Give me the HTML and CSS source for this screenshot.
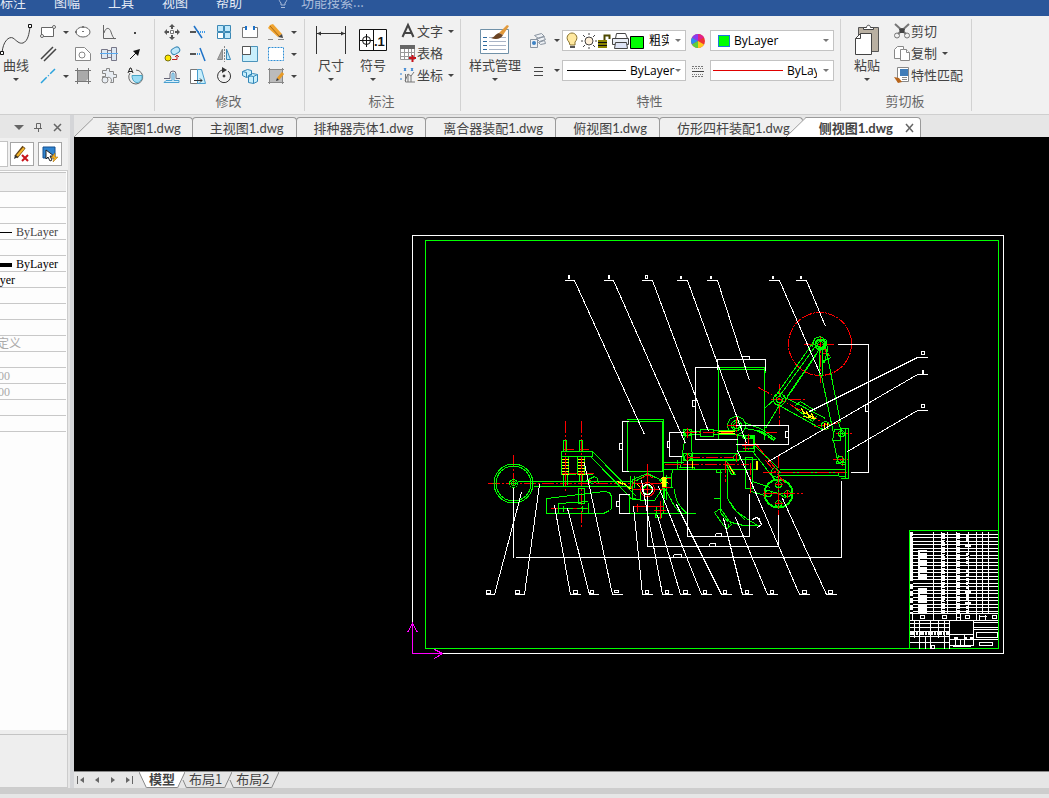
FILE: index.html
```html
<!DOCTYPE html>
<html lang="zh-CN">
<head>
    <meta charset="utf-8">
    <title>侧视图1.dwg</title>
    <link rel="stylesheet" href="styles.css">
</head>
<body>

<nav class="menubar">
  <a href="#">标注</a>
  <a href="#">图幅</a>
  <a href="#">工具</a>
  <a href="#">视图</a>
  <a href="#">帮助</a>
  <label class="search">
    <svg width="12" height="16" viewBox="0 0 12 16" fill="none" stroke="#a9bcdb"><path d="M4 11V9C1 6 1 1 6 1s5 5 2 8v2zM4 13.500h4"/></svg>
    <input type="text" placeholder="功能搜索..." aria-label="功能搜索">
  </label>
</nav>

<div class="ribbon">
  <!-- draw -->
  <section class="group">
    <div class="tools">
      <button class="big curve">
        <svg width="32" height="32" viewBox="0 0 32 32" fill="none" stroke="#444"><path d="M2 30C3 18 9 13 13 15c4 3 6 6 10 5 5-2 6-9 7-16"/><path d="M28.500 1.500h3v3h-3zM.5 28.500h3v3h-3z" fill="#fff" stroke="#111"/></svg>
        曲线<i class="arrow"></i>
      </button>
      <div class="icons draw-icons">
        <button aria-label="矩形"><svg width="18" height="18" fill="#fff" stroke="#666"><path d="M2.500 4.500h12v9h-12z"/><circle cx="15" cy="4" r="1.500"/><circle cx="3" cy="13" r="1.500"/></svg></button>
        <button class="drop" aria-label="矩形选项"><i class="arrow"></i></button>
        <button aria-label="椭圆"><svg width="18" height="18" fill="#fff" stroke="#666"><ellipse cx="9" cy="9" rx="7" ry="5"/><path d="M8 3h2v2H8zM1 8h2v2H1zM8 8h2v1H8z" fill="#777" stroke="none"/></svg></button>
        <button aria-label="公式曲线"><svg width="18" height="18" fill="none" stroke="#666"><path d="M3.500 2v13.500H16M4 10c2-7 6-5 7-1 1 3 2 6 4 7"/></svg></button>
        <button aria-label="点"><svg width="18" height="18"><path d="M8 9h2v2H8z" fill="#444"/></svg></button>

        <button aria-label="平行线"><svg width="18" height="18" stroke="#444"><path d="M2 14L14 2M5 16L17 4" stroke-width="1.500"/></svg></button>
        <span></span>
        <button aria-label="局部放大"><svg width="18" height="18" fill="#fff" stroke="#888"><path d="M1.500 2.500h9l6 6v7h-15z"/><circle cx="8" cy="10" r="3"/></svg></button>
        <button aria-label="轴"><svg width="18" height="18" fill="#dde7f2" stroke="#778"><path d="M1.500 4.500h6v9h-6zM7.500 5.500h4v7h-4zM11.500 2.500h5v13h-5z"/><path d="M0 8.500h18" stroke="#5aaaf0"/></svg></button>
        <button aria-label="箭头"><svg width="18" height="18"><path d="M4 14L12 6" stroke="#111"/><path d="M14 4l-2 7-5-5z" fill="#111"/></svg></button>

        <button aria-label="直线"><svg width="18" height="18" stroke="#2ba3dd"><path d="M2 16L16 2" stroke-width="1.500" stroke-dasharray="8 2 1 2"/></svg></button>
        <button class="drop" aria-label="直线选项"><i class="arrow"></i></button>
        <button aria-label="剖面线"><svg width="18" height="18"><path d="M3 3h12v8l-4 4H3z" fill="#aaa"/><path d="M3.500 1v16M14.500 1v16M1 3.500h16M1 14.500h16" stroke="#777"/></svg></button>
        <button aria-label="零件库"><svg width="18" height="18" fill="#e8edf3" stroke="#888"><path d="M2.500 3.500h4v-2h3v3h4v3h3v3h-3v5h-3a3 3 0 1 0-5-2h-3v-4h3v-3h-3z"/><circle cx="5" cy="13" r="3"/></svg></button>
        <button aria-label="文字圆弧"><svg width="18" height="18" fill="none" stroke="#666"><path d="M10 3a7 7 0 1 1-6 3"/><path d="M6 8.500h10c1 4-3 8-6 7s-4-4-4-7z" fill="#9adcf5" stroke="#4aa5c5"/><path d="M2 6l2-5h1l2 5M3 4.500h3" stroke="#222"/></svg></button>
      </div>
    </div>
  </section>

  <!-- modify -->
  <section class="group">
    <div class="tools">
      <div class="icons edit-icons">
        <button aria-label="平移"><svg width="18" height="18" fill="#555"><path d="M7.500 7.500h3v3h-3z" fill="#fff" stroke="#777"/><path d="M9 1l3 3h-2v2H8V4H6zM9 17l3-3h-2v-2H8v2H6zM1 9l3-3v2h2v2H4v2zM17 9l-3-3v2h-2v2h2v2z"/></svg></button>
        <button aria-label="裁剪"><svg width="18" height="18" fill="none"><path d="M1 9h6" stroke="#555" stroke-width="2"/><path d="M9 9h8" stroke="#3d9be9" stroke-width="2" stroke-dasharray="1 1"/><path d="M5 3l8 12" stroke="#1d72c8" stroke-width="1.500"/></svg></button>
        <button aria-label="阵列"><svg width="18" height="18" stroke="#3b88b5"><path d="M2.500 2.500h6v6h-6zM9.500 2.500h6v6h-6zM9.500 9.500h6v6h-6z" fill="#bfe8fb"/><path d="M2.500 9.500h6v6h-6z" fill="#fff"/></svg></button>
        <button aria-label="打断"><svg width="18" height="18" fill="none" stroke="#777"><path d="M5 4.500H1.500v10h15v-10H13" fill="#fff"/><path d="M5 3v4M13 3v4" stroke="#1d72c8" stroke-width="2"/></svg></button>
        <button aria-label="删除"><svg width="18" height="18"><path d="M3 2l3-1 9 10-4 3L1 5z" fill="#f0a431"/><path d="M3 3l9 10" stroke="#a86a15"/><path d="M11 14l4-3 1 4z" fill="#444"/><path d="M1 16.500h5M11 16.500h6" stroke="#888"/></svg></button>
        <button class="drop" aria-label="删除选项"><i class="arrow"></i></button>

        <button aria-label="平移复制"><svg width="18" height="18"><rect x="8" y="3" width="9" height="6" rx="3" fill="#bfe8fb" stroke="#3b88b5" transform="rotate(-30 12 6)"/><circle cx="5" cy="13" r="3" fill="#ffe800" stroke="#77700d"/><path d="M9 14.500h5v-4M12 12l2-2 2 2" fill="none" stroke="#b22"/></svg></button>
        <button aria-label="延伸"><svg width="18" height="18"><path d="M1 9h6" stroke="#555" stroke-width="2"/><path d="M8 9h4" stroke="#3d9be9" stroke-width="2" stroke-dasharray="1 1"/><path d="M11 3l5 13" stroke="#1d72c8" stroke-width="1.500"/></svg></button>
        <button aria-label="镜像"><svg width="18" height="18" stroke="#888"><path d="M7.500 4v10.500h-5z" fill="#aaa"/><path d="M11.500 4v10.500h4z" fill="#bfe8fb" stroke="#3b88b5"/><path d="M9.500 1v16" stroke-dasharray="2 1"/></svg></button>
        <button aria-label="缩放"><svg width="18" height="18"><path d="M1.500 1.500h15v15h-15z" fill="#c9effc" stroke="#4c93ba"/><path d="M1.500 1.500h8v8h-8z" fill="#fff" stroke="#555"/></svg></button>
        <button aria-label="拉伸"><svg width="18" height="18"><path d="M1.500 2.500h15v13h-15z" fill="#fff" stroke="#2f8fd6" stroke-dasharray="2 1"/></svg></button>
        <button class="drop" aria-label="拉伸选项"><i class="arrow"></i></button>

        <button aria-label="等距线"><svg width="18" height="18" fill="none" stroke="#667"><path d="M1 11.500h6V7a3 3 0 0 1 6 0v4.500h4"/><path d="M1 15.500h15v-2h-5V7a1 1 0 0 0-2 0v6.500H3z" fill="#d9effa" stroke="#4a9fcf"/></svg></button>
        <button aria-label="拔模"><svg width="18" height="18"><path d="M1.500 2.500h7v14h-7z" fill="#fff" stroke="#777"/><path d="M8.500 2.500h4l4 14h-8z" fill="#c9effc" stroke="#4a9fcf"/><path d="M5 13.500h8M11 11.500l2 2-2 2" fill="none" stroke="#333"/></svg></button>
        <button aria-label="旋转"><svg width="18" height="18" fill="none" stroke="#333"><path d="M7 3a6.500 6.500 0 1 0 6 1"/><path d="M7 0l5 3-5 3z" fill="#333" stroke="none"/><circle cx="9" cy="9" r="1" fill="#333"/></svg></button>
        <button aria-label="分解"><svg width="18" height="18" fill="#c9effc" stroke="#3387b8"><path d="M1.500 4.500l5-2 4 1v5l-5 2-4-2zM7.500 8.500l4-2 5 1v7l-4 2-5-1z"/><path d="M7.500 8.500l5 1 4-2M12.500 9.500v7M1.500 4.500l4 1v5"/></svg></button>
        <button aria-label="编辑填充"><svg width="18" height="18"><path d="M3 3h12v12H3z" fill="#bbb"/><path d="M2.500 1v16M15.500 1v16M1 2.500h16M1 15.500h16" stroke="#888"/><path d="M11 12l5-6" stroke="#e79a26" stroke-width="3"/><path d="M9 14l1-3 2 2z" fill="#333"/></svg></button>
        <button class="drop" aria-label="编辑填充选项"><i class="arrow"></i></button>
      </div>
    </div>
    <h2>修改</h2>
  </section>

  <!-- annotate -->
  <section class="group">
    <div class="tools annotate">
      <button class="big">
        <svg width="32" height="32" fill="none" stroke="#333"><path d="M1.500 3v28M30.500 3v28M2 10.500h28"/><path d="M2 10.500l4-2v4zM30 10.500l-4-2v4z" fill="#333" stroke="none"/></svg>
        尺寸<i class="arrow"></i>
      </button>
      <button class="big">
        <svg width="32" height="32" fill="none" stroke="#111"><path d="M2.500 6.500h27v21h-27z" fill="#fff"/><path d="M16.500 6v21M3 17.500h13M9.500 11v13"/><circle cx="9.500" cy="17.500" r="4"/><text class="glyph-num" x="17" y="23">.1</text></svg>
        符号<i class="arrow"></i>
      </button>
      <div class="stack">
        <button><svg width="18" height="18" fill="none" stroke="#444"><path d="M3.500 15L9 3l5.500 12M5 11h8" stroke-width="2"/></svg>文字<i class="arrow"></i></button>
        <button><svg width="18" height="18" fill="#fff" stroke="#999"><path d="M1.500 1.500h14v14h-14zM2 8.500h13M2 12.500h13M5.500 4v12M9.500 4v12M12.500 4v12"/><path d="M1 1h15v4H1z" fill="#666" stroke="none"/><path d="M10 14h7M13.500 11v7" stroke="#c8141c" stroke-width="2"/></svg>表格</button>
        <button><svg width="18" height="18" fill="none" stroke="#777"><path d="M6.500 8v8H16M6 15l3-7 3 2 3-4M9 8v8M12 10v6"/><path d="M5 2l2 3M7 2L5 5M12 2l2 3M14 2l-2 3M2 7v2M2 12v2" stroke="#2a7cd0"/></svg>坐标<i class="arrow"></i></button>
      </div>
    </div>
    <h2>标注</h2>
  </section>

  <!-- properties -->
  <section class="group">
    <div class="tools props">
      <button class="big styles">
        <svg width="32" height="32" fill="none"><path d="M1.500 6.500h28v24h-28z" fill="#fff" stroke="#7091a8"/><path d="M4 14.500h4M4 18.500h4M4 22.500h4M4 26.500h4" stroke="#2d6a9f"/><path d="M10 14.500h17M10 18.500h17M10 22.500h17M10 26.500h17" stroke="#a9b4c6"/><path d="M20 10l8-8 2 1-6 9z" fill="#e29a3c"/><path d="M12 15c3 0 4-4 8-5l4 2c-2 4-7 5-12 3z" fill="#6b4423"/></svg>
        样式管理<i class="arrow"></i>
      </button>
      <div class="prop-grid">
        <button class="with-drop" aria-label="图层"><svg width="18" height="18" fill="#eef1f5" stroke="#8a94a0"><path d="M5.500 3.500l7-2 3 3-6 2zM7.500 6.500l7-2 2 3-6 2zM9.500 10.500l6-2 1 3-5 1z"/><path d="M1.500 7.500h7v8h-7z"/><circle cx="5" cy="11" r="2" fill="#3d82c4" stroke="none"/></svg><i class="arrow"></i></button>
        <div class="combo clipped">
          <svg width="80" height="18" viewBox="0 0 80 18">
            <path d="M4 10C0 6 3 1 7 1s7 5 3 9v3H5z" fill="#ffe9a0" stroke="#8a7430"/><path d="M5 14h5v2H5z" fill="#555"/>
            <circle cx="24" cy="9" r="4" fill="#fff0d8" stroke="#444"/><path d="M24 1v2M24 15v2M16 9h2M30 9h2M18 3l2 2M28 13l2 2M18 15l2-2M28 5l2-2" stroke="#444"/>
            <path d="M33 8h9v8h-9z" fill="#8a8400"/><path d="M33 10.500h9M33 13.500h9" stroke="#111"/><path d="M39.500 8V3.500h5V7" fill="none" stroke="#4d4900" stroke-width="2"/>
            <path d="M50.500 6.500l1-5h9l2 5z" fill="#fff" stroke="#444"/><path d="M47.500 6.500h16v6h-16z" fill="#e8edf6" stroke="#444"/><path d="M50.500 10.500h11l1 6h-13z" fill="#dde3f5" stroke="#444"/>
            <path d="M65.500 4.500h13v12h-13z" fill="#0f0" stroke="#000"/>
          </svg>
          <select aria-label="当前图层"><option>粗实线层</option></select><i class="arrow"></i>
        </div>
        <button aria-label="颜色"><svg width="18" height="18"><circle cx="9" cy="9" r="7" fill="#e33"/><path d="M9 9V2a7 7 0 0 1 6 3.500z" fill="#e0218a"/><path d="M9 9L3 5.500A7 7 0 0 1 9 2z" fill="#8a3cf0"/><path d="M9 9L3 12.500a7 7 0 0 1 0-7z" fill="#2b8cf5"/><path d="M9 9v7a7 7 0 0 1-6-3.500z" fill="#5cd23c"/><path d="M9 9l6 3.500A7 7 0 0 1 9 16z" fill="#ffc91a"/></svg></button>
        <div class="combo">
          <svg class="swatch" width="12" height="12"><path d="M0 0h12v12H0z" fill="#0f0" stroke="#1a7adb" stroke-width="2"/></svg>
          <select aria-label="当前颜色"><option>ByLayer</option></select><i class="arrow"></i>
        </div>

        <button class="with-drop" aria-label="线宽"><svg width="18" height="18" stroke="#444"><path d="M5 5.500h9M5 9.500h9" /><path d="M5 13.500h9"/></svg><i class="arrow"></i></button>
        <div class="combo">
          <svg class="sample" width="59" height="1"><path d="M0 0h59v1H0z" fill="#000"/></svg>
          <select aria-label="当前线宽"><option>ByLayer</option></select><i class="arrow"></i>
        </div>
        <button aria-label="线型"><svg width="18" height="18" stroke="#777"><path d="M3 4.500h12M3 14.500h12" stroke-dasharray="2 1"/><path d="M3 6.500h12M3 12.500h12" stroke-dasharray="1 1"/><path d="M3 9.500h12" stroke="#444"/></svg></button>
        <div class="combo clipped">
          <svg width="70" height="1"><path d="M0 0h70v1H0z" fill="#e00000"/></svg>
          <select aria-label="当前线型"><option>ByLayer</option></select><i class="arrow"></i>
        </div>
      </div>
    </div>
    <h2>特性</h2>
  </section>

  <!-- clipboard -->
  <section class="group">
    <div class="tools clip">
      <button class="big">
        <svg width="32" height="32"><path d="M7.500 4.500h20v24h-20z" fill="#b9b0a2" stroke="#555"/><path d="M12.500 6.500v-2h3c0-3 4-3 4 0h3v2z" fill="#fff" stroke="#444"/><path d="M9.500 10.500h11v21h-16v-16z" fill="#fff" stroke="#444"/><path d="M9.500 10.500v5h-5" fill="none" stroke="#444"/></svg>
        粘贴<i class="arrow"></i>
      </button>
      <div class="stack">
        <button><svg width="18" height="18" fill="none" stroke="#777"><path d="M2 2l11 10M16 2L5 12" stroke-width="2"/><path d="M6 7l3-1 3 1-1 4H7z" fill="#444" stroke="none"/><circle cx="4" cy="13.500" r="2.500"/><circle cx="14" cy="13.500" r="2.500"/></svg>剪切</button>
        <button><svg width="18" height="18" fill="#fff" stroke="#888"><path d="M4.500 2.500h6v12h-9v-9z"/><path d="M10.500 5.500h3l3 3v8h-9v-11z"/><path d="M13.500 5.500v3h3"/></svg>复制<i class="arrow"></i></button>
        <button><svg width="18" height="18"><path d="M4.500 1.500h11v14h-11z" fill="#fff" stroke="#888"/><path d="M7 3h8v7H7z" fill="#3f7cb8"/><path d="M9 13.500h5M9 11.500h5" stroke="#888"/><path d="M1 11l5 1 3 4-4 1z" fill="#b8651b"/></svg>特性匹配</button>
      </div>
    </div>
    <h2>剪切板</h2>
  </section>
</div>

<div class="workspace">
  <aside class="panel">
    <header class="panel-head">
      <button aria-label="菜单"><svg width="10" height="10"><path d="M0 3h10L5 8z" fill="#666"/></svg></button>
      <button aria-label="固定"><svg width="10" height="10" fill="none" stroke="#666"><path d="M3.500 6V1.500h4V6M1 6.500h8M5.500 7v3"/></svg></button>
      <button aria-label="关闭"><svg width="10" height="10" stroke="#666"><path d="M2 2l7 7M9 2L2 9" stroke-width="1.500"/></svg></button>
    </header>
    <div class="panel-tools">
      <select aria-label="选择对象"></select>
      <button aria-label="取消选择"><svg width="18" height="18"><path d="M3 12L11 2" stroke="#604015" stroke-width="4"/><path d="M4 11l7-8" stroke="#f4b52a" stroke-width="2"/><path d="M1 14l1-4 3 2z" fill="#333"/><path d="M9 10l6 6M15 10l-6 6" stroke="#c8141c" stroke-width="2"/></svg></button>
      <button aria-label="快速选择"><svg width="18" height="18"><path d="M2 2h12v11H2z" fill="#2f84d0" stroke="#144f8f"/><path d="M5 5l8 6H9l2 4-2 1-2-4-2 2z" fill="#fff" stroke="#222"/><path d="M14 8l-4 5h3l-1 4 5-5h-3z" fill="#f7b424" stroke="#a56a00" stroke-width=".5"/></svg></button>
    </div>
    <div class="props-box">
      <table class="props-table">
        <tr class="head"><td></td></tr>
        <tr><td></td></tr>
        <tr><td></td></tr>
        <tr><td><svg width="52" height="1"><path d="M0 0h52v1H0z"/></svg>ByLayer</td></tr>
        <tr><td></td></tr>
        <tr class="dark"><td><svg width="52" height="4"><path d="M0 0h52v4H0z"/></svg>ByLayer</td></tr>
        <tr class="dark"><td class="value">ByLayer</td></tr>
        <tr><td></td></tr>
        <tr><td></td></tr>
        <tr><td></td></tr>
        <tr class="dim"><td class="custom">自定义</td></tr>
        <tr><td></td></tr>
        <tr class="dim"><td class="number">0.00</td></tr>
        <tr class="dim"><td class="number">0.00</td></tr>
        <tr><td></td></tr>
        <tr><td></td></tr>
      </table>
      <div class="hint"></div>
    </div>
  </aside>

  <main class="document">
    <div class="doc-tabs">
      <svg class="slant" width="20" height="20"><path d="M0 20L20 0v20z" fill="#f0f0f0"/><path d="M0 20L20 .5" stroke="#9a9a9a"/></svg>
      <button class="first">装配图1.dwg</button>
      <button>主视图1.dwg</button>
      <button>排种器壳体1.dwg</button>
      <button>离合器装配1.dwg</button>
      <button>俯视图1.dwg</button>
      <button>仿形四杆装配1.dwg</button>
      <svg class="slant over" width="20" height="20"><path d="M0 20L20 0v20z" fill="#fff"/><path d="M0 20L20 .5" stroke="#9a9a9a"/></svg>
      <button class="first active">侧视图1.dwg<svg width="10" height="10" stroke="#666"><path d="M1 1l7 8M8 1L1 9" stroke-width="1.500"/></svg></button>
    </div>

    <div class="canvas">
      <svg class="drawing" viewBox="74 137 975 634" fill="none" shape-rendering="crispEdges">
        <g transform="translate(.5 .5)">
        <!-- sheet frame -->
        <path class="w" d="M412 235H1003V653H412z"/>
        <path class="g" d="M425 240H998V648H425z"/>

        <!-- left wheel and beam -->
        <g class="r">
          <path class="axis" d="M487 483H668M513 454V508M565 420V490M581 420V527"/>
          <path d="M550 508h12M563 508h24M561 473h32M563 449h10M578 449h10M587 479l10 4"/>
        </g>
        <g class="g">
          <circle cx="513" cy="483" r="19.500"/><circle cx="513" cy="483" r="17.500"/>
          <circle cx="513" cy="483" r="4"/><circle cx="513" cy="483" r="2"/>
          <path d="M517 481H632M533 486H632M510 483h7"/>
          <path d="M563 450V440h3v10M579 450V440h3v10M561 474V451H592V456H561M584 456V474M561 474h14M578 474h14M568 456v18M577 456v18M563 474v12M567 474v10M579 474v7M582 474v7"/>
          <path d="M592 451l44 45M591 457l40 41M635 498h-7M586 480l8-4 3 2 1 5M588 482l5 1"/>
          <path d="M546 498l58-7 5 1 2 4v12l-2 2-6 3H546zM578 488v15h6V488zM588 502v10M558 512v-9l30-2M558 508h14M576 508h10M563 505v6M582 505v6"/>
        </g>
        <path class="y hatch" d="M563 458V474M567 458V474M579 458V474M583 458V474"/>
        <path class="y" d="M617 481l6 3M622 482l9 7"/>

        <!-- seed hopper and meter -->
        <g class="g">
          <path d="M627 421h35v50h-35zM626 419h37v4M663 421V513M629 471h34M629 494v19h66M664 477h7v10h-7M666 474v25"/>
          <path d="M632 483v-4l15-6 15 7v4M632 479v20l8 0M636 480l11-6 11 4 6 8-6 8-4 6H640v-10M630 475v12M634 475v12"/>
          <circle cx="647" cy="489" r="4"/>
          <path d="M663 462h20M663 469h30M663 486l7 12c3 7 7 13 12 15h13M674 488c0 12 6 20 13 25M672 470c-2 8-2 14 0 18M655 513v4h6v-4M660 504v11M656 505v10"/>
          <path class="bold" d="M663 486v12"/>
        </g>
        <g class="r">
          <circle cx="647" cy="489" r="7"/>
          <path d="M647 463V506M632 489h30M633 506h30M653 510h12M660 500v18M637 503v8M641 478l6-4 6 4M631 488c0-3 2-6 4-8"/>
          <path class="axis" d="M664 464h25"/>
          <path d="M662 478h8M661 487h8"/>
        </g>
        <circle class="w" cx="647" cy="489" r="5"/>
        <path class="y thick" d="M663 476v10"/>
        <path class="y" d="M660 478h6M660 482h7M637 484l3 3"/>

        <!-- fertiliser box and frame -->
        <g class="g">
          <path d="M718 367v72M764 367v72M718 367h47v3M718 369h47M765 370v2M694 439h43M685 433l-5 34M691 433l1 36M678 467h16v2M677 459v10"/>
          <circle cx="687" cy="432" r="3"/><circle cx="687" cy="457" r="3"/><circle cx="736" cy="457" r="3"/>
          <circle cx="736" cy="425" r="9"/><circle cx="736" cy="425" r="5"/><circle cx="736" cy="425" r="3"/>
          <path d="M683 429h8v6h-8zM683 453h8v7h-8zM687 453H738M687 460H736M690 431h10M690 434h10M700 429h13v7h-13zM713 430h22M713 434h22M690 459H756M678 469H756M716 469v3h5M720 469v29h-7M727 469v29"/>
          <path d="M744 422l18 7 14 10M744 428l18 3 12 9M737 435v16h17v-16zM742 438h11v10h-11M738 451l-1 4M754 445l24 23M753 452l22 28"/>
          <path d="M720 498v14l8 10M727 498l9 13 13 9 10 6M727 498l6 10 12 12M714 512l6-4 11 16-4 4-4-3zM728 520l3 2 12 3h15M728 527v-4"/>
          <path d="M745 457v31h7V457zM752 481l18 6M751 491l17 5M765 407l10-9M765 428l18-30M778 475V472h60v3H778M779 469h59"/>
          <circle class="bold" cx="778" cy="493" r="14"/>
          <circle cx="778" cy="484" r="3"/><circle cx="778" cy="503" r="3"/><circle cx="768" cy="493" r="3"/><circle cx="787" cy="493" r="3"/>
          <path d="M778 478v30M763 493h30M764 489l14 4M778 493l8 5M771 470l3-3 5 4-2 6-6-2z"/>
          <path d="M725 459l10 15h-4l-5-10"/>
          <path class="bold" d="M757 430l5 3M762 432l4 3M768 436l6 4M741 436h4M749 436h4"/>
        </g>
        <g class="r">
          <path class="axis" d="M684 432h50M687 457h46M668 464h80M725 460v21M750 462v31M778 455V515M764 493h38M762 472H846M726 425h20M736 415v20M748 433v18M765 432h11M755 443l24 30M765 460l20 23"/>
          <path d="M687 427v10M687 452v10M736 453v8M741 445h12M745 438v12M774 484h8M774 503h8M764 490v6M787 489v8M727 463l6 10"/>
        </g>
        <path class="y" d="M718 431h16M718 433h16M756 460v9M757 460v9M692 460v7M729 466l5 8"/>

        <!-- ground wheel linkage -->
        <g class="r">
          <circle class="rim" cx="819.500" cy="343.500" r="31.500"/>
          <path class="axis" d="M803 344h32M820 336v46M770 399h34M779 383v42M758 387l68 37M835 433h16M832 459h18M842 455v10"/>
          <path d="M814 426l26-4M824 348l4 8M822 353h6"/>
        </g>
        <g class="g">
          <circle class="bold" cx="820" cy="344" r="5"/><circle cx="820" cy="344" r="3"/><circle cx="779" cy="399" r="6"/><circle cx="779" cy="399" r="3"/><circle cx="825" cy="425" r="4"/>
          <path d="M812 343l2-5 6-2 6 4 1 10-3 12h-3M812 343l-38 54M814 347l-36 50M818 350l-32 47M816 354l-30 44M814 338l-2 9M819 345v30h3V345M824 341l16 81M821 375l12 58M822 361l9-4M826 352l4 4"/>
          <path d="M783 396l42 22M777 404l45 25M795 405l5-4 16 10M795 408l17 13 4-5"/>
          <path d="M840 428h8v50h-8M845 428v50M834 429h6v11h-8zM838 422l5 14M833 440l4 20M838 455l-2 8 9 1M838 469h7v7h-7M840 433h5M840 460l5 3"/>
          <circle cx="841" cy="433" r="3"/><circle cx="840" cy="459" r="3"/>
        </g>
        <g class="y"><path d="M802 411l14 8M824 422v7M827 422v6M803 416l10 2M801 408l3 6M806 411l3 6M811 413l3 6"/></g>

        <!-- dimensions -->
        <g class="w">
          <path d="M628 421h-6v50h6M619 443h3v6h-3zM629 494h-10v19h10M616 501h3v5h-3z"/>
          <path d="M513 487v70M515 557H841V480M673 554h8v3M673 557v-3M647 495v51H778V514M709 543h6v3M709 546v-3M687 460v76H749V493M715 533h6v3M715 536v-3"/>
          <path d="M717 369V359h48v11M742 359v-3h7v3M718 367H695v72h42M692 400h3v6h-3zM683 432h-14v24h12M667 441h2v6h-2zM735 425h53v19H735M785 431h3v6h-3zM837 344h31v128H850M865 404h3v7h-3z"/>
          <path d="M752 519l4-2 3 3 2 4-4 3M756 517l4 2"/>
        </g>

        <!-- leaders -->
        <g class="w">
          <path d="M564 280H574L644 434M603 280H613L685 443M641 280H652L708 431M676 280H687L746 443M706 280H717L749 380M768 280H779L820 374M795 280H806L825 326"/>
          <path d="M927 357H917L809 411M927 374H917L768 461M927 410H917L847 451"/>
          <path d="M485 594H494L521 492M514 594H524L539 484M580 594H570L554 505M598 594H589L567 508M622 594H612L584 463M652 594H642L633 506M672 594H662L641 480M690 594H680L657 515M711 594H701L658 486M731 594H721L676 504M752 594H742L723 518M777 594H767L735 517M809 594H799L737 450M836 594H826L782 498"/>
          <path d="M568 275h1v3h-1zM608 275h1v3h-1zM645 275h2v3h-2zM680 276h1v2h-1zM710 276h1v2h-1zM772 276h1v2h-1zM800 276h1v2h-1z"/>
          <path d="M921 351h3v3h-3zM922 370h1v3h-1zM921 404h3v3h-3z"/>
          <path d="M486 590h4v3h-4zM515 590h4v3h-4zM573 590h4v3h-4zM590 590h3v3h-3zM614 590h4v2h-4zM645 590h3v3h-3zM665 590h3v3h-3zM683 590h4v3h-4zM703 590h3v3h-3zM723 590h3v3h-3zM745 590h3v3h-3zM770 590h3v3h-3zM802 590h4v3h-4zM828 590h4v3h-4z"/>
        </g>

        <!-- parts list -->
        <g class="w">
          <path class="rows" d="M955 533V612"/>
          <path d="M909 531V648M933 531V620M941 531V613M947 531V613M956 531V620M968 531V613M976 531V620M982 531V613M988 531V613M909 613H998M909 620H998"/>
          <path stroke-width="3" d="M911 531V580"/><path stroke-width="3" stroke-dasharray="5 2" d="M911 583V613"/>
          <path stroke-width="3" stroke-dasharray="6 1" d="M943 532V613M958 532V613"/>
          <path stroke-width="9" d="M922 549V578M922 587V602M922 604V612"/>
          <path stroke-width="3" stroke-dasharray="3 1" d="M967 533V541M967 552V564M967 569V612"/>
          <path stroke-width="6" d="M967 544v2M967 590v2M967 601v2"/>
          <path d="M920 615h4v3h-4zM942 615h4v3h-4zM965 615h4v3h-4zM992 615h4v3h-4zM912 613v7M960 613v7M956 617h4M978 616h8M979 614v5M985 614v5"/>
          <path d="M909 623h40M909 627h40M909 631h40M909 636h40M909 642h40M914 620v17M919 620v28M930 620v28M938 620v17M944 620v28M949 620v28M925 636v12M949 634H973M949 639H973M949 645H973V620M973 622H998M973 627H998M973 629H998M973 639H998M955 639v6M960 639v6M964 634v11"/>
          <path stroke-width="3" stroke-dasharray="5 1 2 1" d="M909 633H948"/>
          <path stroke-width="2" d="M953 637h4M963 637h3M969 637h3"/>
          <path d="M976 632h21v5h-21zM979 642h13v3h-13zM952 646h18M931 645h3v3h-3z"/>
        </g>
        <path stroke="#000" d="M919 552h8M919 559h8M919 566h8M919 573h8M919 594h8M919 538h8M911 536h2M943 541h2M943 555h2M943 570h2M943 585h2M943 600h2M967 555h2M967 577h2M967 584h2"/>
        <path class="g" d="M998 530H909V648M998 530V648"/>

        <!-- ucs -->
        <path stroke="#f0f" d="M412 653V624M407 632l5-9 5 9M412 653H442M434 649l8 4-8 5"/>
        </g>
      </svg>
    </div>

    <div class="sheet-tabs">
      <button class="step" aria-label="第一页"><svg width="8" height="8" fill="#666"><path d="M0 0h1v8H0zM7 1v6L3 4z"/></svg></button>
      <button class="step" aria-label="上一页"><svg width="8" height="8" fill="#666"><path d="M6 1v6L2 4z"/></svg></button>
      <button class="step" aria-label="下一页"><svg width="8" height="8" fill="#666"><path d="M2 1v6l4-3z"/></svg></button>
      <button class="step" aria-label="最后一页"><svg width="8" height="8" fill="#666"><path d="M7 0h1v8H7zM1 1v6l4-3z"/></svg></button>
      <button class="sheet active"><svg width="8" height="17"><path d="M0 0l8 17V0z" fill="#fff"/><path d="M0 0l8 17" stroke="#888"/></svg><span>模型</span><svg width="8" height="17"><path d="M8 0L0 17V0z" fill="#fff"/><path d="M8 0L0 17" stroke="#888"/></svg></button>
      <button class="sheet"><svg width="8" height="17"><path d="M4 8l4 9" stroke="#888"/></svg><span>布局1</span><svg width="8" height="17"><path d="M8 0L0 17" stroke="#888"/></svg></button>
      <button class="sheet"><svg width="8" height="17"><path d="M4 8l4 9" stroke="#888"/></svg><span>布局2</span><svg width="8" height="17"><path d="M8 0L0 17" stroke="#888"/></svg></button>
    </div>
  </main>
</div>
<footer class="status"></footer>

</body>
</html>
```
FILE: styles.css
```css
* {
  box-sizing: border-box;
}

body {
  display: flex;
  flex-direction: column;
  height: 100vh;
  margin: 0;
  overflow: hidden;
  background-color: #e6e6e6;
  color: #444;
  font-family: "Noto Sans CJK SC", sans-serif;
  font-size: 13px;
  line-height: 16px;
}

button {
  display: flex;
  align-items: center;
  justify-content: center;
  margin: 0;
  padding: 0;
  border: none;
  background: none;
  color: inherit;
  font: inherit;
  white-space: nowrap;
}

svg {
  display: block;
  flex: none;
}

.arrow {
  flex: none;
  width: 0;
  height: 0;
  border: 3px solid transparent;
  border-top-color: #444;
  border-bottom: none;
}

/* menu */
.menubar {
  display: flex;
  flex: none;
  align-items: flex-end;
  gap: 28px;
  height: 16px;
  padding-bottom: 6px;
  overflow: hidden;
  background-color: #2b579a;
}

.menubar a {
  color: #e4eaf4;
  text-decoration: none;
}

.search {
  display: flex;
  gap: 12px;
  margin-left: 7px;
}

.search input {
  width: 90px;
  height: 16px;
  padding: 0;
  border: none;
  background: none;
  font: inherit;
}

.search input::placeholder {
  color: #a9bcdb;
}

/* ribbon */
.ribbon {
  display: flex;
  flex: none;
  height: 99px;
  padding: 3px 0;
  border-bottom: 1px solid #cfcfcf;
  background-color: #f1f1f1;
}

.group {
  display: flex;
  flex-direction: column;
  align-items: center;
  padding: 2px 6px 0 4px;
  border-right: 1px solid #d2d2d2;
}

.group:first-child {
  padding-left: 0;
}

.group h2 {
  margin: 6px 0 0;
  color: #666;
  font-size: 13px;
  font-weight: normal;
  line-height: 16px;
}

.tools {
  display: flex;
  height: 66px;
}

.icons {
  display: grid;
  grid-template-rows: repeat(3, 22px);
}

.draw-icons {
  grid-template-columns: 26px 9px repeat(3, 26px);
  margin-left: 3px;
}

.edit-icons {
  grid-template-columns: repeat(5, 26px) 9px;
}

.big {
  flex-direction: column;
  justify-content: flex-start;
  width: 32px;
  padding-top: 2px;
}

.big svg {
  margin-bottom: 2px;
}

.big .arrow {
  margin-top: 5px;
}

.big.styles {
  width: 52px;
}

.glyph-num {
  fill: #111;
  stroke: none;
  font: bold 13px "Liberation Sans", sans-serif;
}

.annotate {
  gap: 10px;
  padding-left: 6px;
}

.stack {
  display: grid;
  grid-template-rows: repeat(3, 22px);
  justify-items: start;
  margin-top: -1px;
}

.stack .arrow {
  margin-left: 5px;
}

.props {
  gap: 8px;
  padding-left: 4px;
}

.prop-grid {
  display: grid;
  grid-template-columns: 33px 124px 24px 124px;
  grid-template-rows: 21px 21px;
  align-content: center;
  row-gap: 9px;
  padding-top: 3px;
}

.with-drop {
  justify-content: flex-start;
  gap: 7px;
}

.combo {
  display: flex;
  align-items: center;
  padding: 0 4px 0 2px;
  border: 1px solid #c3c3c3;
  background-color: #fff;
}

.combo select {
  flex: 1;
  min-width: 0;
  padding: 0 0 0 4px;
  border: none;
  appearance: none;
  background: none;
  color: #000;
  font: 12px "Open Sans", "Noto Sans CJK SC", sans-serif;
}

.combo.clipped select {
  margin-right: 6px;
}

.combo .arrow {
  border-top-color: #777;
}

.combo .swatch {
  margin-left: 5px;
}

.combo .sample {
  margin-left: 2px;
}

.clip {
  gap: 10px;
  padding: 0 2px 0 6px;
}

/* workspace */
.workspace {
  display: flex;
  flex: 1;
  min-height: 0;
}

.panel {
  display: flex;
  flex: none;
  flex-direction: column;
  width: 74px;
  overflow: hidden;
  border-right: 4px solid #d4d5d8;
}

.panel-head {
  display: flex;
  justify-content: flex-end;
  gap: 9px;
  height: 23px;
  padding-right: 8px;
}

.panel-tools {
  display: flex;
  align-items: center;
  gap: 4px;
  height: 32px;
  margin-right: 2px;
  background-color: #f0f0f0;
}

.panel-tools select {
  width: 60px;
  height: 26px;
  margin: 0 -2px 0 -52px;
  border: 1px solid #c3c3c3;
  border-radius: 0;
  appearance: none;
  background-color: #fff;
}

.panel-tools button {
  width: 24px;
  height: 24px;
  border: 1px solid #a5a5a5;
  background-color: #fff;
}

.props-box {
  display: flex;
  flex: 1;
  flex-direction: column;
  margin-right: 2px;
  border: 1px solid #ccc;
  border-left: none;
  background-color: #fdfdfd;
}

/* the name column is scrolled out past the window edge */
.props-table {
  width: 106px;
  margin-top: 1px;
  margin-left: -40px;
  border-collapse: collapse;
  border-top: 1px solid #c4c4c4;
  font: 12px "Liberation Serif", "Noto Sans CJK SC", serif;
}

.props-table td {
  height: 16px;
  padding: 0;
  border-bottom: 1px solid #c8c8c8;
  line-height: 14px;
  white-space: nowrap;
}

.props-table .head td {
  height: 19px;
  background-color: #f0f0f0;
}

.props-table svg {
  display: inline-block;
  margin-right: 4px;
  vertical-align: middle;
}

.dark {
  color: #000;
}

.dim {
  color: #aaa;
}

.props-table .value {
  padding-left: 13px;
}

.props-table .custom {
  padding-left: 25px;
}

.props-table .number {
  padding-left: 29px;
}

.hint {
  height: 57px;
  margin-top: auto;
  border-top: 4px solid #eee;
  background-color: #eee;
  box-shadow: inset 0 1px #c4c4c4;
}

.document {
  display: flex;
  flex: 1;
  flex-direction: column;
  min-width: 0;
}

.doc-tabs {
  display: flex;
  align-items: flex-end;
  height: 22px;
}

.doc-tabs button {
  height: 20px;
  margin-left: -1px;
  padding: 0 12px 0 17px;
  border: 1px solid #9a9a9a;
  border-bottom: none;
  border-radius: 4px 4px 0 0;
  background-color: #f0f0f0;
  font-family: Lato, "Noto Sans CJK SC", sans-serif;
}

.doc-tabs .first {
  padding: 0 11px 0 14px;
  border-left: none;
  border-radius: 0 4px 0 0;
}

.doc-tabs .active {
  gap: 12px;
  padding-right: 5px;
  background-color: #fff;
  font-weight: bold;
}

.slant.over {
  position: relative;
  margin-left: -17px;
}

.canvas {
  flex: 1;
  min-height: 0;
  background-color: #000;
}

.drawing {
  width: 100%;
  height: 100%;
}

.w {
  stroke: #fff;
}

.g {
  stroke: #0f0;
}

.r {
  stroke: #f00;
}

.y {
  stroke: #ff0;
}

.axis {
  stroke-dasharray: 12 2 2 2;
}

.rim {
  stroke-dasharray: 8 1 2 1;
}

.hatch {
  stroke-width: 3px;
  stroke-dasharray: 1 2;
}

.bold {
  stroke-width: 2px;
}

.thick {
  stroke-width: 4px;
}

.rows {
  stroke-width: 86px;
  stroke-dasharray: 1 2 1 3;
}

.sheet-tabs {
  display: flex;
  height: 17px;
  padding-left: 1px;
  border-top: 1px solid #888;
}

.step {
  width: 16px;
  padding-right: 5px;
}

.sheet {
  align-items: stretch;
  margin-left: -6px;
}

.sheet.active {
  margin-left: 0;
  font-weight: bold;
}

.sheet span {
  padding: 0 2px;
  border-bottom: 1px solid #888;
  line-height: 13px;
}

.sheet.active span {
  background-color: #fff;
}

.status {
  flex: none;
  height: 10px;
  border-top: 6px solid #cdcdcd;
}
```
